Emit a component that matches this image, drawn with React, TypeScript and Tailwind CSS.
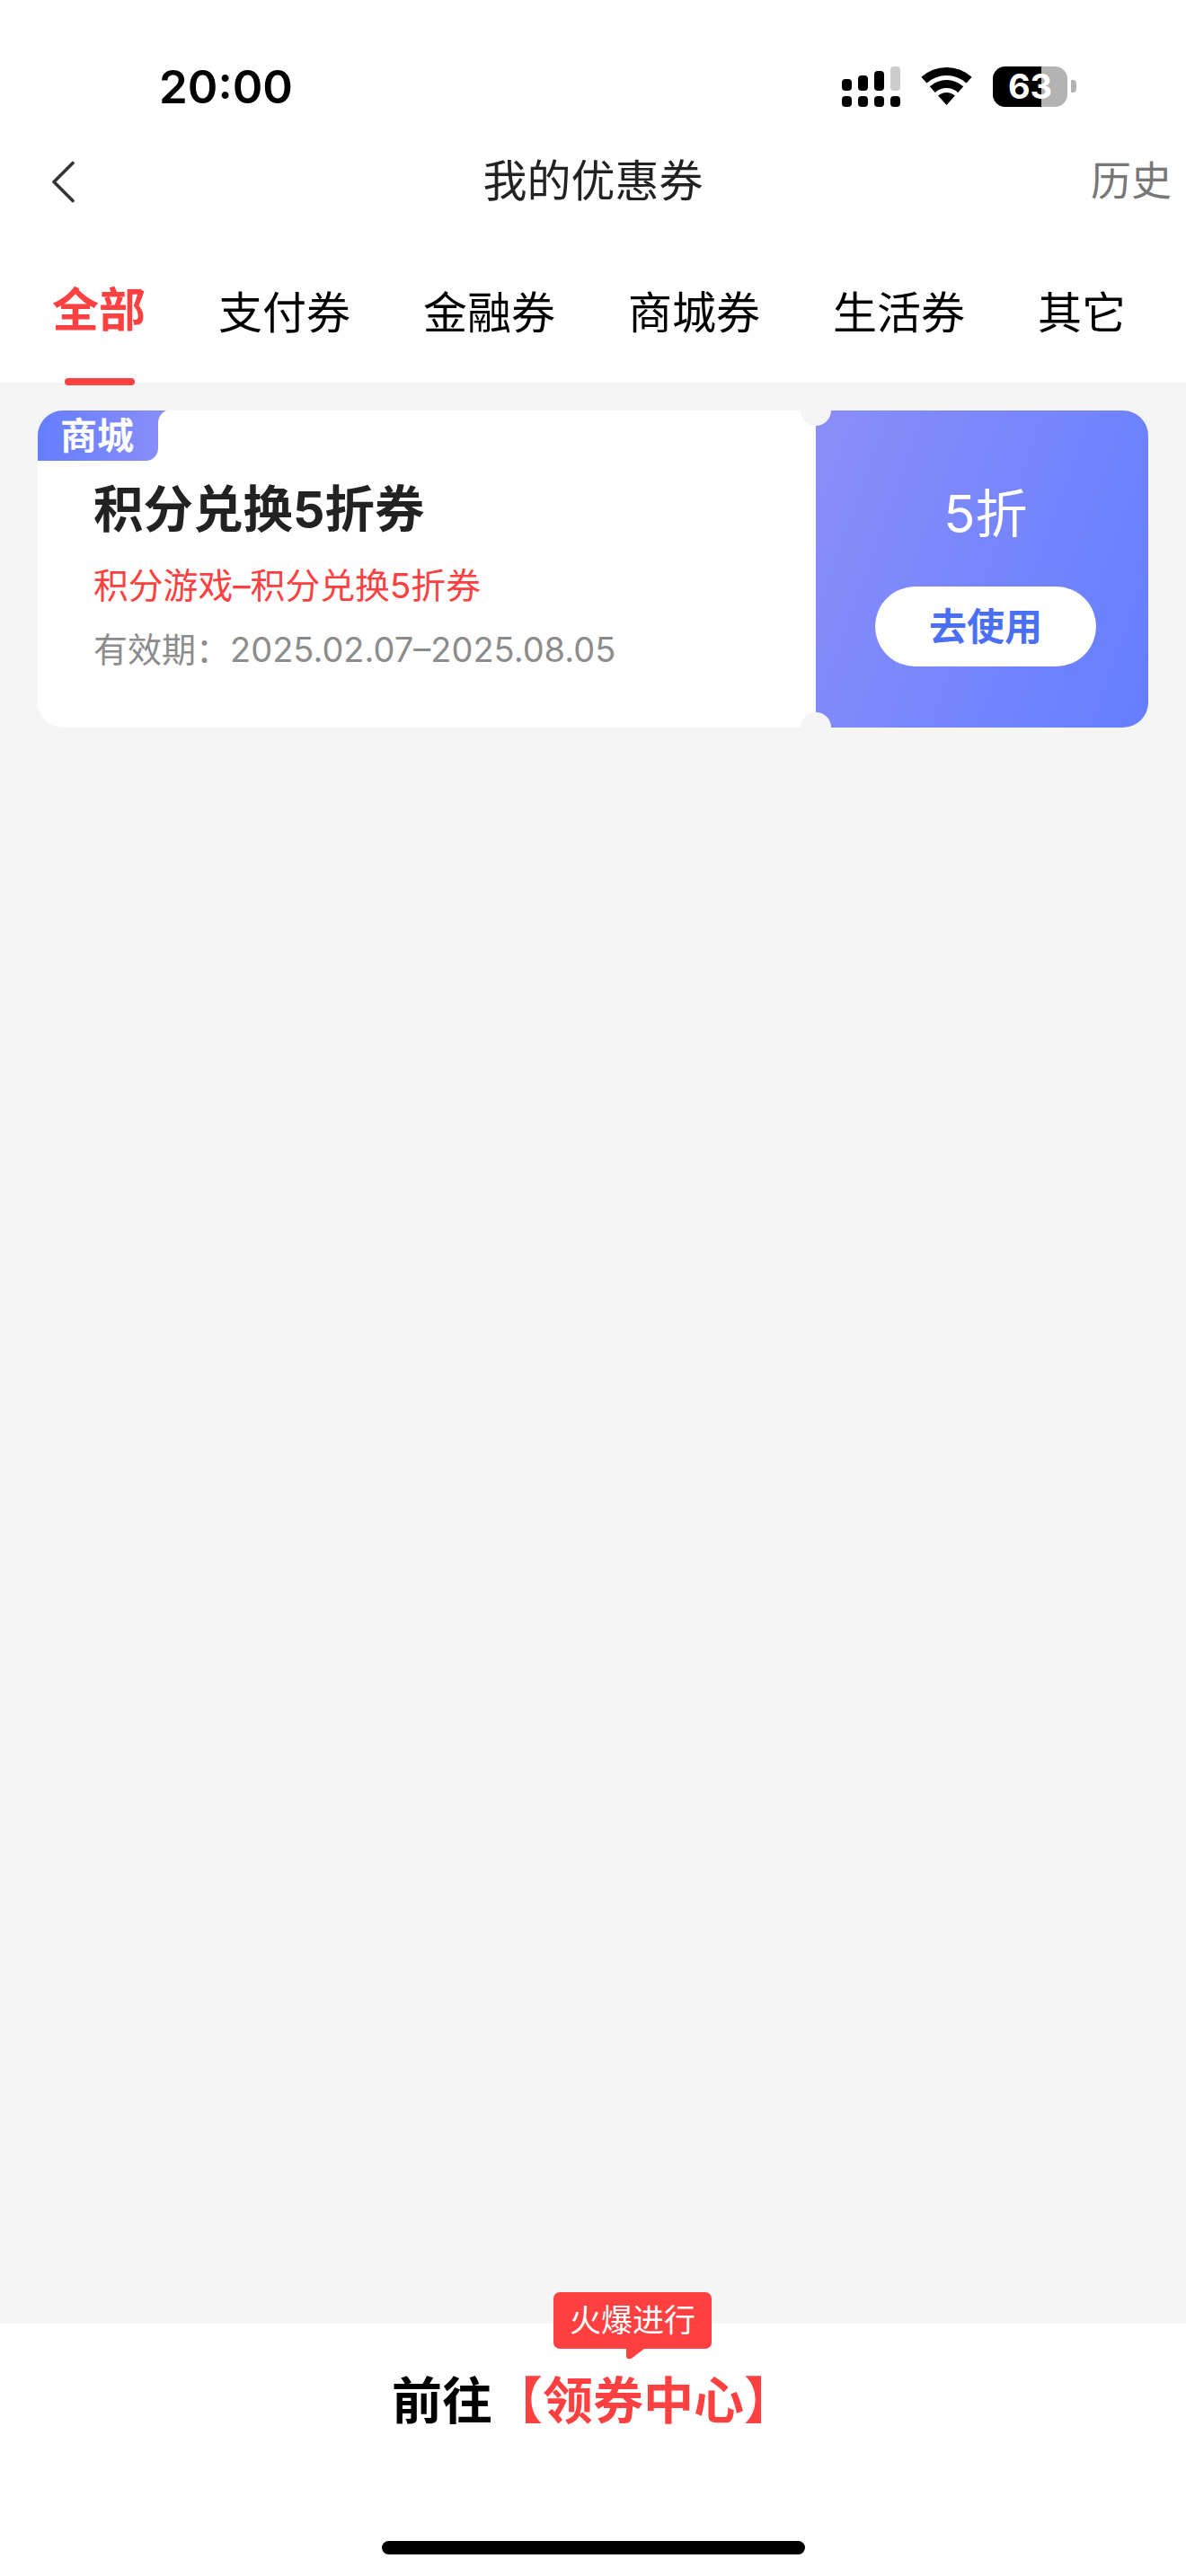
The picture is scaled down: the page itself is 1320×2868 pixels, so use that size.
const font = "font-['Inter','Noto_Sans_CJK_SC',sans-serif]";

const tabs = ["支付券", "金融券", "商城券", "生活券", "其它"];

function StatusIcons() {
  return (
    <div className="flex items-start">
      {/* cellular */}
      <svg width="65" height="45" viewBox="0 0 65 45" className="mr-[23px] mt-0">
        <rect x="0" y="14" width="11" height="13" rx="4" fill="#000" />
        <rect x="18" y="10" width="11" height="17" rx="4" fill="#000" />
        <rect x="36" y="5" width="11" height="22" rx="4" fill="#000" />
        <rect x="54" y="0" width="11" height="27" rx="4" fill="#ccc" />
        <rect x="0" y="33" width="11" height="12" rx="4" fill="#000" />
        <rect x="18" y="33" width="11" height="12" rx="4" fill="#000" />
        <rect x="36" y="33" width="11" height="12" rx="4" fill="#000" />
        <rect x="54" y="33" width="11" height="12" rx="4" fill="#000" />
      </svg>
      {/* wifi */}
      <svg width="57" height="42" viewBox="0 0 57 42" className="mr-[23px] mt-px">
        <path d="M0.4 10.8A42 42 0 0 1 56.6 10.8L50.6 17.5A33 33 0 0 0 6.4 17.5Z" fill="#000" />
        <path d="M9.8 21.2A28 28 0 0 1 47.2 21.2L41.2 27.9A19 19 0 0 0 15.8 27.9Z" fill="#000" />
        <path d="M19.1 31.6A14 14 0 0 1 37.9 31.6L28.5 42Z" fill="#000" />
      </svg>
      {/* battery */}
      <div className="relative flex h-[45px] w-[83px] overflow-hidden rounded-[14px] bg-[#b3b3b3]">
        <div className="h-full w-[54px] bg-black" />
        <span className="absolute inset-0 flex items-center justify-center text-[38px] font-bold leading-[45px] text-white">
          63
        </span>
      </div>
      <div className="ml-[4px] mt-[15px] h-[14px] w-[6px] rounded-r-[4px] bg-[#b3b3b3]" />
    </div>
  );
}

function Coupon() {
  return (
    <div className="relative flex h-[353px] w-[1236px] overflow-hidden rounded-[28px] bg-white">
      <div className="w-[866px] pl-[62px] pt-[80px]">
        <h3 className="text-[55.5px] font-bold leading-[60px] text-[#222]">积分兑换5折券</h3>
        <p className="mt-[32px] text-[38.8px] leading-[46px] text-[#ff4040]">积分游戏–积分兑换5折券</p>
        <p className="mt-[25px] text-[38px] leading-[46px] text-[#8c8c8c]">有效期：2025.02.07–2025.08.05</p>
      </div>
      <div className="flex flex-1 flex-col items-center bg-[linear-gradient(110deg,#8a8ef9,#657eff)] pl-[8px] pt-[82px]">
        <div className="text-[58px] leading-[66px] text-white">5折</div>
        <button className="mt-[48px] flex h-[89px] w-[246px] items-center justify-center rounded-full bg-white text-[42px] font-semibold text-[#4a6ff5]">
          去使用
        </button>
      </div>
      {/* notches */}
      <div className="absolute left-[849px] top-[-17px] h-[34px] w-[34px] rounded-full bg-[#f5f5f5]" />
      <div className="absolute bottom-[-17px] left-[849px] h-[34px] w-[34px] rounded-full bg-[#f5f5f5]" />
      {/* tag */}
      <div className="absolute left-0 top-0 h-[56px] w-[143px]">
        <svg width="143" height="56" viewBox="0 0 143 56" className="absolute inset-0">
          <defs>
            <linearGradient id="tagFill" x1="0" x2="1" y1="0" y2="0">
              <stop offset="0" stopColor="#657eff" />
              <stop offset="1" stopColor="#8a8ef9" />
            </linearGradient>
          </defs>
          <path d="M0 0H143C137 3 134 8 134 14V42C134 50 128 56 120 56H0Z" fill="url(#tagFill)" />
        </svg>
        <span className="absolute left-[25px] top-[3px] text-[41px] font-semibold leading-[50px] text-white">商城</span>
      </div>
    </div>
  );
}

export default function App() {
  return (
    <div lang="zh-CN" className={`flex h-[2868px] w-[1320px] flex-col bg-white ${font}`}>
      <div className="relative z-10 h-[426px] bg-white">
        {/* status bar */}
        <div className="flex h-[160px] items-start justify-between pl-[177px] pr-[122px] pt-[74px]">
          <div className="text-[51px] font-semibold leading-[46px] text-black">20:00</div>
          <StatusIcons />
        </div>
        {/* nav */}
        <div className="relative flex h-[84px] items-center justify-center">
          <svg width="27" height="47" viewBox="0 0 27 47" className="absolute left-[57px] top-[19px]" fill="none">
            <path d="M24 2.5L3 23.5L24 44.5" stroke="#333" strokeWidth="3.6" strokeLinecap="round" strokeLinejoin="round" />
          </svg>
          <h1 className="text-[49px] leading-[60px] text-[#222]">我的优惠券</h1>
          <span className="absolute right-[16px] text-[45px] leading-[60px] text-[#777]">历史</span>
        </div>
        {/* tabs */}
        <div className="flex items-start gap-[81px] pl-[58px] pt-[75px]">
          <div className="relative -mt-[3px]">
            <div className="text-[52px] font-bold leading-[60px] text-[#ff4040]">全部</div>
          </div>
          {tabs.map((t) => (
            <div key={t} className="text-[49px] leading-[60px] text-black">
              {t}
            </div>
          ))}
        </div>
        <div className="absolute bottom-[-3px] left-[72px] h-[8px] w-[78px] rounded-full bg-[#ff4040]" />
      </div>

      <div className="flex-1 bg-[#f5f5f5] pl-[42px] pt-[31px]">
        <Coupon />
      </div>

      <div className="relative h-[281px] bg-white pt-[56px]">
        <div className="absolute left-[616px] top-[-35px]">
          <div className="flex h-[63px] w-[176px] items-center justify-center rounded-[7px] bg-[#ff4040] text-[35px] leading-[63px] text-white">
            火爆进行
          </div>
          <svg width="22" height="12" viewBox="0 0 22 12" className="absolute left-[80px] top-[63px]">
            <path d="M1 0H21L8 10C5 12 1 12 1 8Z" fill="#ff4040" />
          </svg>
        </div>
        <div className="text-center text-[56px] font-bold leading-[60px] text-black">
          前往<span className="text-[#ff4040]">【领券中心】</span>
        </div>
        <div className="mx-auto mt-[126px] h-[15px] w-[471px] rounded-full bg-black" />
      </div>
    </div>
  );
}
